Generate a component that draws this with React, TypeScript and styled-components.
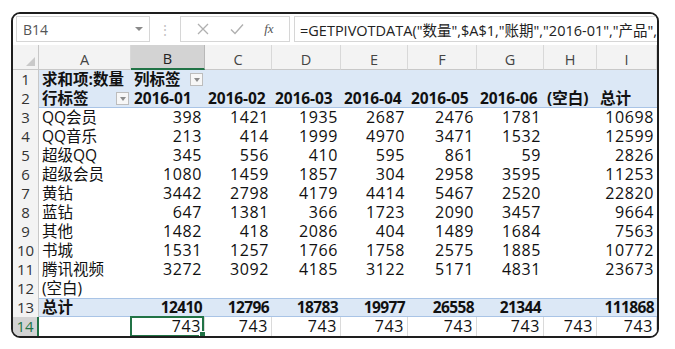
import React from "react";
import styled, { createGlobalStyle, css } from "styled-components";

const Global = createGlobalStyle`
  html, body { margin: 0; padding: 0; background: #ffffff; }
  body { font-family: "Open Sans", "Noto Sans CJK SC", sans-serif; }
`;

const FONT = `"Open Sans", "Noto Sans CJK SC", sans-serif`;
const GREEN = "#217346";
const BLUE = "#dce8f6";
const BLUE_LINE = "#a9c4e6";
const COLS = [26, 92, 74, 67, 69, 67, 69, 67, 53, 60];

const Frame = styled.div`
  margin: 12px 0 0 11px;
  width: 648px;
  height: 326px;
  box-sizing: border-box;
  border: 2px solid #1e1e1e;
  border-radius: 9px;
  overflow: hidden;
  background: #ffffff;
  display: flex;
  flex-direction: column;
`;

const FormulaBar = styled.div`
  height: 31px;
  flex: none;
  display: flex;
  align-items: flex-start;
  padding: 2px 0 0 3px;
  box-sizing: border-box;
  background: #ffffff;
`;

const NameBox = styled.div`
  width: 134px;
  height: 26px;
  box-sizing: border-box;
  border: 1px solid #d6d6d6;
  display: flex;
  align-items: center;
  justify-content: space-between;
  padding: 0 6px 0 6px;
  font-family: ${FONT};
  font-size: 14px;
  color: #555;
`;

const Caret = styled.span`
  width: 0;
  height: 0;
  border-left: 4px solid transparent;
  border-right: 4px solid transparent;
  border-top: 4px solid #8a8a8a;
`;

const Dots = styled.div`
  width: 30px;
  height: 26px;
  display: flex;
  align-items: center;
  justify-content: center;
  color: #c4c4c4;
  font-size: 14px;
`;

const FxBox = styled.div`
  width: 110px;
  height: 26px;
  box-sizing: border-box;
  border: 1px solid #d6d6d6;
  display: flex;
  align-items: center;
  justify-content: space-around;
  padding: 0 6px;
`;

const FxIcon = styled.span`
  font-family: "Liberation Serif", serif;
  font-style: italic;
  font-size: 13px;
  color: #555;
`;

const FormulaInput = styled.div`
  margin-left: 4px;
  flex: 1;
  height: 26px;
  box-sizing: border-box;
  border: 1px solid #d6d6d6;
  border-right: none;
  display: flex;
  align-items: center;
  padding-left: 5px;
  white-space: nowrap;
  overflow: hidden;
  font-family: ${FONT};
  font-size: 14.5px;
  color: #222;
`;

const Grid = styled.div`
  display: grid;
  grid-template-columns: ${COLS.map((c) => c + "px").join(" ")};
  grid-auto-rows: 19px;
  grid-template-rows: 25px;
`;

const Corner = styled.div`
  background: #f3f3f3;
  border-right: 1px solid #c8c8c8;
  border-bottom: 1px solid #c8c8c8;
  box-sizing: border-box;
  position: relative;
  &::after {
    content: "";
    position: absolute;
    right: 3px;
    bottom: 3px;
    width: 0;
    height: 0;
    border-left: 9px solid transparent;
    border-bottom: 9px solid #c9c9c9;
  }
`;

const ColHead = styled.div<{ $active?: boolean }>`
  box-sizing: border-box;
  display: flex;
  align-items: center;
  justify-content: center;
  padding-top: 5px;
  line-height: 18px;
  font-family: ${FONT};
  font-size: 14.5px;
  background: ${(p) => (p.$active ? "#d3d3d3" : "#f3f3f3")};
  border-right: 1px solid ${(p) => (p.$active ? "#b8b8b8" : "#d8d8d8")};
  border-bottom: ${(p) => (p.$active ? `2px solid ${GREEN}` : "1px solid #c8c8c8")};
  color: ${(p) => (p.$active ? "#222" : "#444")};
`;

const RowHead = styled.div<{ $active?: boolean }>`
  box-sizing: border-box;
  display: flex;
  align-items: center;
  justify-content: center;
  line-height: 19px;
  font-family: ${FONT};
  font-size: 15px;
  background: ${(p) => (p.$active ? "#d3d3d3" : "#f3f3f3")};
  color: ${(p) => (p.$active ? GREEN : "#333")};
  border-right: ${(p) => (p.$active ? `2px solid ${GREEN}` : "1px solid #c8c8c8")};
`;

type Tone = "head" | "body" | "total" | "plain";
type Kind = "text" | "num" | "label" | "boldnum" | "colhead";

const kindFont = {
  text: css`font-size: 15.5px; font-weight: 400;`,
  num: css`font-size: 16px; font-weight: 400; letter-spacing: 0.6px;`,
  label: css`font-size: 15.5px; font-weight: 700;`,
  boldnum: css`font-size: 15.5px; font-weight: 700; letter-spacing: -0.6px;`,
  colhead: css`font-size: 15.5px; font-weight: 700; letter-spacing: -0.1px;`,
};

const Cell = styled.div<{
  $tone: Tone;
  $kind?: Kind;
  $right?: boolean;
  $topLine?: boolean;
  $bottomLine?: boolean;
  $selected?: boolean;
}>`
  position: relative;
  box-sizing: border-box;
  display: flex;
  align-items: center;
  justify-content: ${(p) => (p.$right ? "flex-end" : "flex-start")};
  padding: 0 3px 0 3px;
  white-space: nowrap;
  line-height: 19px;
  font-family: ${FONT};
  ${(p) => kindFont[p.$kind || "text"]}
  color: #111;
  background: ${(p) => (p.$tone === "head" || p.$tone === "total" ? BLUE : "#ffffff")};
  ${(p) => p.$topLine && css`border-top: 1px solid ${BLUE_LINE};`}
  ${(p) => p.$bottomLine && css`border-bottom: 1px solid ${BLUE_LINE};`}
  ${(p) => p.$tone === "plain" && css`border-right: 1px solid #dadada;`}
  ${(p) =>
    p.$selected &&
    css`
      &::before {
        content: "";
        position: absolute;
        inset: -1px 0 -1px -1px;
        border: 2px solid ${GREEN};
        pointer-events: none;
      }
      &::after {
        content: "";
        position: absolute;
        right: -3px;
        bottom: -3px;
        width: 6px;
        height: 6px;
        background: ${GREEN};
        border: 1px solid #fff;
      }
    `}
`;

const FilterBtn = styled.span`
  position: absolute;
  right: 2px;
  top: 3px;
  width: 13px;
  height: 13px;
  box-sizing: border-box;
  border: 1px solid #bdbdbd;
  background: #f7f7f7;
  display: flex;
  align-items: center;
  justify-content: center;
  &::after {
    content: "";
    width: 0;
    height: 0;
    border-left: 3.5px solid transparent;
    border-right: 3.5px solid transparent;
    border-top: 4px solid #8c8c8c;
  }
`;

const COL_LETTERS = ["A", "B", "C", "D", "E", "F", "G", "H", "I"];

const body: [string, (number | "")[]][] = [
  ["QQ会员", [398, 1421, 1935, 2687, 2476, 1781, "", 10698]],
  ["QQ音乐", [213, 414, 1999, 4970, 3471, 1532, "", 12599]],
  ["超级QQ", [345, 556, 410, 595, 861, 59, "", 2826]],
  ["超级会员", [1080, 1459, 1857, 304, 2958, 3595, "", 11253]],
  ["黄钻", [3442, 2798, 4179, 4414, 5467, 2520, "", 22820]],
  ["蓝钻", [647, 1381, 366, 1723, 2090, 3457, "", 9664]],
  ["其他", [1482, 418, 2086, 404, 1489, 1684, "", 7563]],
  ["书城", [1531, 1257, 1766, 1758, 2575, 1885, "", 10772]],
  ["腾讯视频", [3272, 3092, 4185, 3122, 5171, 4831, "", 23673]],
  ["(空白)", ["", "", "", "", "", "", "", ""]],
];

const totals = [12410, 12796, 18783, 19977, 26558, 21344, "", 111868];
const headers = ["2016-01", "2016-02", "2016-03", "2016-04", "2016-05", "2016-06", "(空白)", "总计"];

export default function App() {
  return (
    <>
      <Global />
      <Frame>
        <FormulaBar>
          <NameBox>
            <span>B14</span>
            <Caret />
          </NameBox>
          <Dots>⋮</Dots>
          <FxBox>
            <svg width="14" height="14" viewBox="0 0 14 14">
              <path d="M2 2 L12 12 M12 2 L2 12" stroke="#b0b0b0" strokeWidth="1.3" fill="none" />
            </svg>
            <svg width="16" height="14" viewBox="0 0 16 14">
              <path d="M2 7.5 L6 11.5 L14 2.5" stroke="#b0b0b0" strokeWidth="1.4" fill="none" />
            </svg>
            <FxIcon>fx</FxIcon>
          </FxBox>
          <FormulaInput>=GETPIVOTDATA("数量",$A$1,"账期","2016-01","产品","QQ会员")</FormulaInput>
        </FormulaBar>
        <Grid>
          <Corner />
          {COL_LETTERS.map((l) => (
            <ColHead key={l} $active={l === "B"}>
              {l}
            </ColHead>
          ))}

          <RowHead>1</RowHead>
          <Cell $tone="head" $kind="label">求和项:数量</Cell>
          <Cell $tone="head" $kind="label">
            列标签
            <FilterBtn />
          </Cell>
          {Array.from({ length: 7 }).map((_, i) => (
            <Cell key={i} $tone="head" />
          ))}

          <RowHead>2</RowHead>
          <Cell $tone="head" $kind="label" $bottomLine>
            行标签
            <FilterBtn />
          </Cell>
          {headers.map((h, i) => (
            <Cell key={h} $tone="head" $kind={i < 6 ? "colhead" : "label"} $bottomLine>
              {h}
            </Cell>
          ))}

          {body.map(([name, vals], r) => (
            <React.Fragment key={name}>
              <RowHead>{r + 3}</RowHead>
              <Cell $tone="body" $kind="text">{name}</Cell>
              {vals.map((v, i) => (
                <Cell key={i} $tone="body" $kind="num" $right>
                  {v}
                </Cell>
              ))}
            </React.Fragment>
          ))}

          <RowHead>13</RowHead>
          <Cell $tone="total" $kind="label" $topLine $bottomLine>总计</Cell>
          {totals.map((v, i) => (
            <Cell key={i} $tone="total" $kind="boldnum" $right $topLine $bottomLine>
              {v}
            </Cell>
          ))}

          <RowHead $active>14</RowHead>
          <Cell $tone="plain" />
          {Array.from({ length: 8 }).map((_, i) => (
            <Cell key={i} $tone="plain" $kind="num" $right $selected={i === 0}>
              743
            </Cell>
          ))}
        </Grid>
      </Frame>
    </>
  );
}
